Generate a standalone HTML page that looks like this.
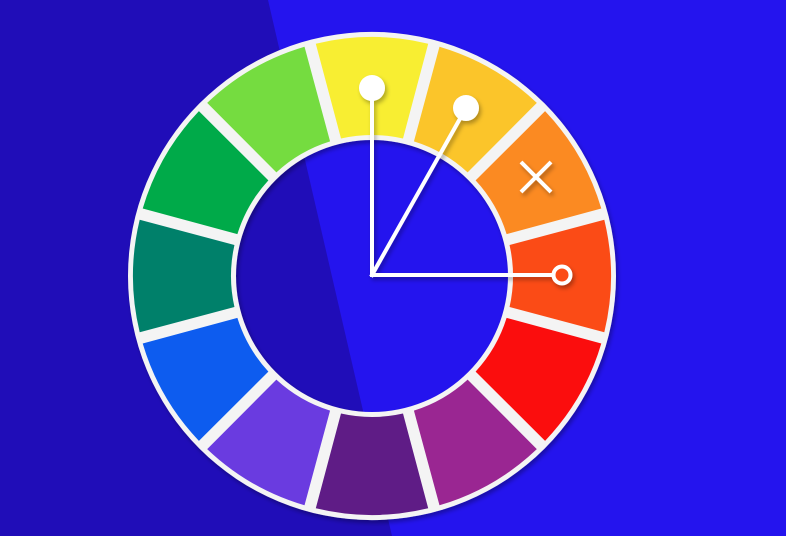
<!DOCTYPE html>
<html><head><meta charset="utf-8"><style>
html,body{margin:0;padding:0;width:786px;height:536px;overflow:hidden;background:#2414ee}
svg{display:block}
</style></head><body>
<svg id="s" width="786" height="536" viewBox="0 0 786 536" xmlns="http://www.w3.org/2000/svg">
<defs><filter id="sh" x="-50%" y="-50%" width="200%" height="200%"><feDropShadow dx="2" dy="3" stdDeviation="2" flood-color="#000" flood-opacity="0.3"/></filter></defs>
<rect width="786" height="536" fill="#2414ee"/>
<polygon points="0,0 268,0 392,536 0,536" fill="#200db8"/>
<g id="wheel" filter="url(#sh)"></g>
<g id="marks"></g>
</svg>
<script>
var cx=372,cy=276,R1=141,R2=239,RW1=136,RW2=244;
var cols=["#f8ee30","#fbc52c","#fb8a20","#fb4c18","#fb0a10","#9a2592","#5e1a86","#6a3ae0","#0a5cef","#01806a","#00aa4a","#74dc40"];
var ns="http://www.w3.org/2000/svg",g=document.getElementById("wheel");
function P(r,a){a=(a-90)*Math.PI/180;return (cx+r*Math.cos(a)).toFixed(2)+","+(cy+r*Math.sin(a)).toFixed(2);}
var ring=document.createElementNS(ns,"path");
ring.setAttribute("d","M"+(cx-RW2)+","+cy+"a"+RW2+","+RW2+" 0 1,0 "+2*RW2+",0a"+RW2+","+RW2+" 0 1,0 "+(-2*RW2)+",0Z M"+(cx-RW1)+","+cy+"a"+RW1+","+RW1+" 0 1,1 "+2*RW1+",0a"+RW1+","+RW1+" 0 1,1 "+(-2*RW1)+",0Z");
ring.setAttribute("fill","#f4f4f4");ring.setAttribute("fill-rule","evenodd");g.appendChild(ring);
for(var i=0;i<12;i++){var c=i*30,go=1.4,gi=2.3;
var d="M"+P(R2,c-15+go)+"A"+R2+","+R2+" 0 0,1 "+P(R2,c+15-go)+"L"+P(R1,c+15-gi)+"A"+R1+","+R1+" 0 0,0 "+P(R1,c-15+gi)+"Z";
var p=document.createElementNS(ns,"path");p.setAttribute("d",d);p.setAttribute("fill",cols[i]);g.appendChild(p);}
document.getElementById("marks").innerHTML=
'<g filter="url(#sh)" stroke="#fff" stroke-width="4" fill="none" stroke-linecap="square">'+
'<path d="M372,88 L372,275 L554,275"/><path d="M372,275 L466,108"/>'+
'<circle cx="372" cy="88" r="13" fill="#fff" stroke="none"/>'+
'<circle cx="466" cy="108" r="13" fill="#fff" stroke="none"/>'+
'<circle cx="562" cy="275" r="8.5" fill="#fb4c18" stroke-width="4"/>'+
'<path d="M521,162 L551,192 M551,162 L521,192" stroke-linecap="butt"/></g>';
</script>
</body></html>
